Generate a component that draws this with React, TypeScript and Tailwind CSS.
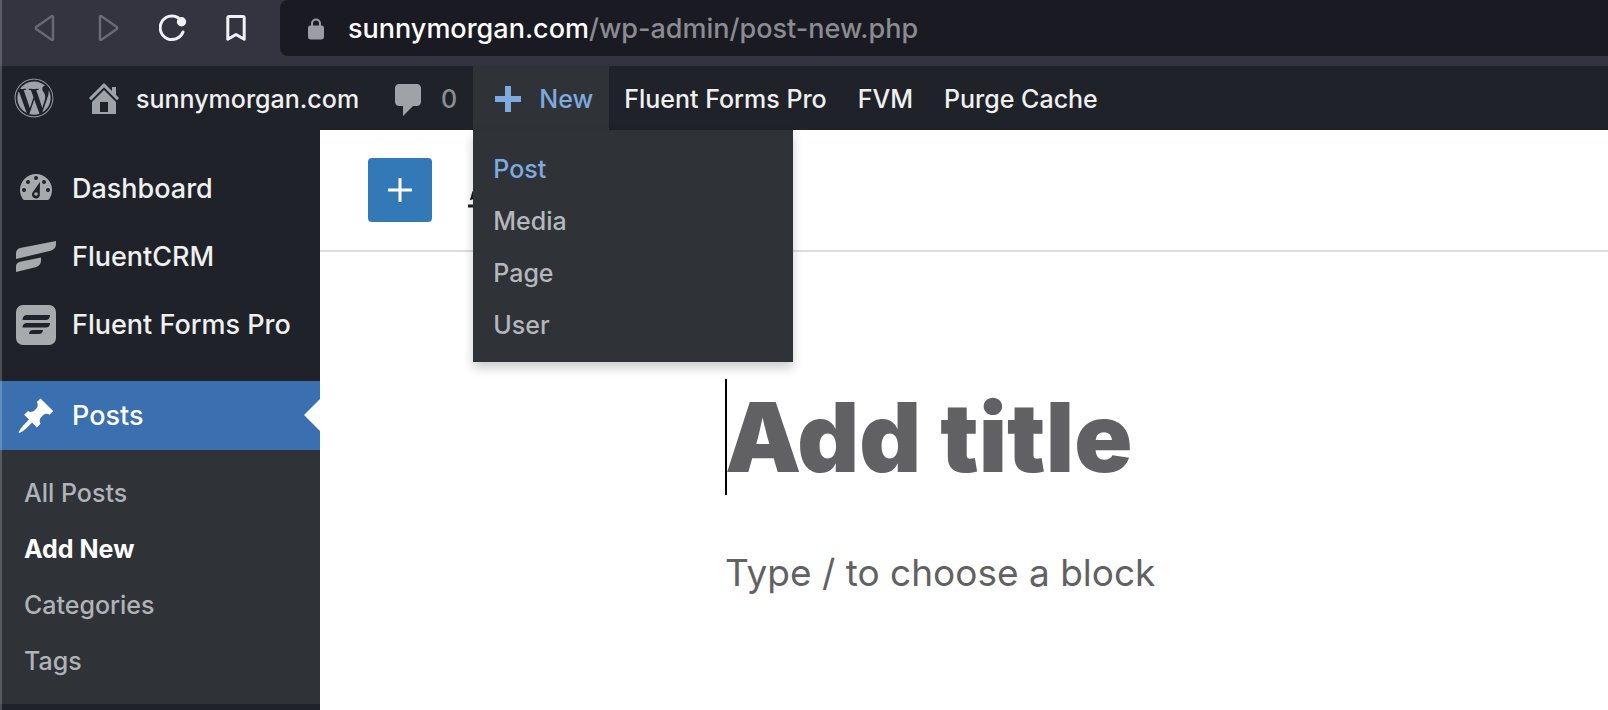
import React, { useState } from 'react'
import { FaWordpress } from 'react-icons/fa'

const submenu = ['All Posts', 'Add New', 'Categories', 'Tags']
const newItems = ['Post', 'Media', 'Page', 'User']

function BrowserBar() {
  return (
    <div className="flex h-[66px] items-start bg-[#343340] pl-[13px]">
      <div className="flex h-14 items-center text-[#f0f0f6]">
        <button aria-label="Back" className="flex w-16 justify-center text-[#6a6978]">
          <svg width="28" height="28" viewBox="0 0 28 28" fill="none" stroke="currentColor" strokeWidth="2.4" strokeLinejoin="round">
            <path d="M22 2.8v22.4c0 .8-.8 1-1.4.6L5.5 15.2c-.9-.7-.9-1.7 0-2.4L20.6 2.2c.6-.4 1.4-.2 1.4.6z" />
          </svg>
        </button>
        <button aria-label="Forward" className="flex w-16 justify-center text-[#6a6978]">
          <svg width="28" height="28" viewBox="0 0 28 28" fill="none" stroke="currentColor" strokeWidth="2.4" strokeLinejoin="round">
            <path d="M5 2.8v22.4c0 .8.8 1 1.4.6l15.1-10.6c.9-.7.9-1.7 0-2.4L6.4 2.2C5.8 1.8 5 2 5 2.8z" />
          </svg>
        </button>
        <button aria-label="Reload" className="flex w-16 justify-center">
          <svg width="28" height="28" viewBox="0 0 28 28" fill="none">
            <path d="M19 3.6A11.8 11.8 0 1 0 24 18" stroke="currentColor" strokeWidth="3" strokeLinecap="round" />
            <circle cx="22.5" cy="7.7" r="4.7" fill="currentColor" />
          </svg>
        </button>
        <button aria-label="Bookmark" className="flex w-16 justify-center">
          <svg width="28" height="28" viewBox="0 0 28 28" fill="none" stroke="currentColor" strokeWidth="3" strokeLinejoin="round">
            <path d="M5.7 2.5h14.6c.5 0 .9.4.9 1v21.8L13 20.5l-8.2 4.8V3.5c0-.6.4-1 .9-1z" />
          </svg>
        </button>
      </div>
      <div className="ml-[11px] flex h-14 grow items-center gap-6 rounded-l-lg bg-[#1a1a23] pt-0.5 pl-7">
        <svg width="16" height="22" viewBox="0 0 16 22" fill="none">
          <path d="M4 9V5.5a4 4 0 0 1 8 0V9" stroke="#9a9da6" strokeWidth="2" />
          <rect y="7.5" width="16" height="14" rx="2.4" fill="#9a9da6" />
        </svg>
        <div className="text-[27px] leading-8 font-medium text-[#8b8b92]">
          <span className="text-white">sunnymorgan.com</span>/wp-admin/post-new.php
        </div>
      </div>
    </div>
  )
}

function AdminBar() {
  const [open, setOpen] = useState(true)

  return (
    <nav className="relative z-10 flex h-16 items-stretch bg-[#1f2329] text-[25px] leading-8 font-medium text-[#f0f0f1]">
      <a href="#" aria-label="WordPress" className="flex items-center px-[14px] text-[#9ea3a8]">
        <FaWordpress size={40} />
      </a>
      <a href="#" className="flex items-center gap-3 px-4 pt-0.5">
        <svg width="40" height="40" viewBox="0 0.5 20 20" fill="#9ea3a8">
          <path d="M16 8.5l1.53 1.53-1.06 1.06L10 4.6l-6.47 6.49-1.06-1.06L10 2.5l4 4v-2h2v4zm-6-2.46l6 5.99V18H4v-5.97zM12 17v-5H8v5h4z" />
        </svg>
        sunnymorgan.com
      </a>
      <a href="#" className="flex items-center gap-3 pt-0.5 pr-4 pl-[14px] text-[#8b8f94]">
        <svg width="40" height="40" viewBox="0 -0.5 20 20" fill="#9ea3a8">
          <path d="M5 2h9c1.1 0 2 .9 2 2v7c0 1.1-.9 2-2 2h-2l-5 5v-5H5c-1.1 0-2-.9-2-2V4c0-1.1.9-2 2-2z" />
        </svg>
        0
      </a>
      <div className="relative flex">
        <button
          className="flex items-center gap-3 bg-[#2f3338] pt-0.5 pr-4 pl-[14px] text-[#7faae0]"
          onClick={() => setOpen(!open)}
        >
          <svg width="40" height="40" viewBox="0 -1.5 20 20" fill="currentColor">
            <path d="M17 7v3h-5v5H9v-5H4V7h5V2h3v5h5z" />
          </svg>
          New
        </button>
        {open && (
          <ul className="absolute top-16 left-0 w-80 bg-[#2f3237] py-3 shadow-[0_6px_10px_rgba(0,0,0,0.2)]">
            {newItems.map((item) => (
              <li key={item}>
                <a
                  href="#"
                  className={`flex h-13 items-center px-5 pt-0.5 ${
                    item === 'Post' ? 'text-[#7faae0]' : 'text-[#b4b7bb]'
                  }`}
                >
                  {item}
                </a>
              </li>
            ))}
          </ul>
        )}
      </div>
      <a href="#" className="flex items-center pt-0.5 pr-4 pl-[15px]">Fluent Forms Pro</a>
      <a href="#" className="flex items-center pt-0.5 pr-4 pl-[15px]">FVM</a>
      <a href="#" className="flex items-center pt-0.5 pr-4 pl-[15px]">Purge Cache</a>
    </nav>
  )
}

function Sidebar() {
  return (
    <aside className="w-80 shrink-0 bg-[#1f2329] pt-[25px] text-[27px] leading-9 font-medium text-[#f0f0f1]">
      <a href="#" className="flex h-17 items-center gap-4 pl-4">
        <svg width="40" height="40" viewBox="0 0 40 40">
          <path d="M7.6 31C5.2 28.2 4 24.8 4 21a16 16 0 0 1 32 0c0 3.8-1.2 7.2-3.6 10z" fill="#a7aaad" />
          <g fill="#1f2329">
            <circle cx="20" cy="9" r="2" />
            <circle cx="12" cy="13" r="2" />
            <circle cx="28" cy="13" r="2" />
            <circle cx="8" cy="21" r="2" />
            <circle cx="32" cy="21" r="2" />
            <path d="M24 13l-.2 11.500a4 4 0 1 1-7.300-1z" />
          </g>
          <circle cx="20" cy="25" r="1.8" fill="#a7aaad" />
        </svg>
        Dashboard
      </a>
      <a href="#" className="flex h-17 items-center gap-4 pl-4">
        <svg width="40" height="40" viewBox="0 0 40 40" fill="#a7aaad">
          <path d="M0 22v-5.5c0-3 1.5-4.8 4-5.5L40 4v3c0 3.500-2 5.800-5.500 6.700z" />
          <path d="M0 35v-5.5c0-2.5 1.5-4 4-4.700L25 20.500V23c0 4-2 6.200-5.500 7.200z" />
        </svg>
        FluentCRM
      </a>
      <a href="#" className="flex h-17 items-center gap-4 pl-4">
        <svg width="40" height="40" viewBox="0 0 40 40">
          <rect width="40" height="40" rx="7" fill="#a7aaad" />
          <g fill="#1f2329">
            <path d="M11 10h23c0 3-1.5 5-4.5 5H6.5c0-3 1.5-5 4.5-5z" />
            <path d="M11 18h23c0 3-1.5 4.6-4.5 4.6H6.5c0-3 1.5-4.6 4.5-4.6z" />
            <path d="M17 25h10c-.3 2.6-1.6 4-4 4H13c.3-2.6 1.6-4 4-4z" />
          </g>
        </svg>
        Fluent Forms Pro
      </a>
      <a href="#" className="relative mt-[22px] flex h-[69px] items-center gap-4 bg-[#3a6fb0] pl-4 text-white">
        <svg width="40" height="40" viewBox="0 0 20 20" fill="currentColor">
          <path d="M10.44 3.02l1.82-1.82 6.36 6.35-1.83 1.82c-1.05-.68-2.48-.57-3.41.36l-.75.75c-.92.93-1.04 2.35-.35 3.41l-1.83 1.82-2.41-2.41-2.8 2.79c-.42.42-3.38 2.71-3.8 2.29s1.86-3.39 2.28-3.81l2.79-2.79L4.1 9.36l1.83-1.82c1.05.69 2.48.57 3.4-.36l.75-.75c.93-.92 1.05-2.35.36-3.41z" />
        </svg>
        Posts
        <span className="absolute top-[18px] right-0 border-y-16 border-r-16 border-y-transparent border-r-white" />
      </a>
      <ul className="bg-[#2f3237] py-[15px] text-[25px] text-[#b0b3b8]">
        {submenu.map((item) => (
          <li key={item}>
            <a
              href="#"
              className={`flex h-14 items-center px-6 ${
                item === 'Add New' ? 'font-bold text-white' : ''
              }`}
            >
              {item}
            </a>
          </li>
        ))}
      </ul>
    </aside>
  )
}

function Editor() {
  return (
    <main className="grow bg-white">
      <div className="flex h-[122px] items-center gap-7 border-b-2 border-[#dddddd] px-12">
        <button aria-label="Add block" className="flex size-16 items-center justify-center rounded bg-[#3479b7]">
          <svg width="24" height="24" viewBox="0 0 24 24" stroke="white" strokeWidth="3">
            <path d="M12 0v24M0 12h24" />
          </svg>
        </button>
        <button aria-label="Tools" className="flex size-12 items-center justify-center">
          <svg width="48" height="48" viewBox="0 0 24 24" fill="#1e1e1e">
            <path d="M20.1 5.1L16.9 2 6.2 12.7l-1.3 4.4 4.5-1.3L20.1 5.1zM4 20.8h8v-1.5H4v1.5z" />
          </svg>
        </button>
      </div>
      <div className="flex flex-col pt-[127px] pl-[405px]">
        <input
          aria-label="Add title"
          placeholder="Add title"
          className="h-[116px] border-l-2 border-black -indent-0.5 text-[96px] font-black outline-none placeholder:text-[#616163]"
        />
        <input
          aria-label="Type / to choose a block"
          placeholder="Type / to choose a block"
          className="mt-[45px] h-16 text-[37px] outline-none placeholder:text-[#616163]"
        />
      </div>
    </main>
  )
}

export default function App() {
  return (
    <div className="relative flex min-h-screen flex-col overflow-hidden font-['Inter',sans-serif]">
      <BrowserBar />
      <AdminBar />
      <div className="flex grow">
        <Sidebar />
        <Editor />
      </div>
      {/* window edge */}
      <div className="pointer-events-none absolute inset-y-0 left-0 z-20 w-0.5 bg-white/20" />
    </div>
  )
}
